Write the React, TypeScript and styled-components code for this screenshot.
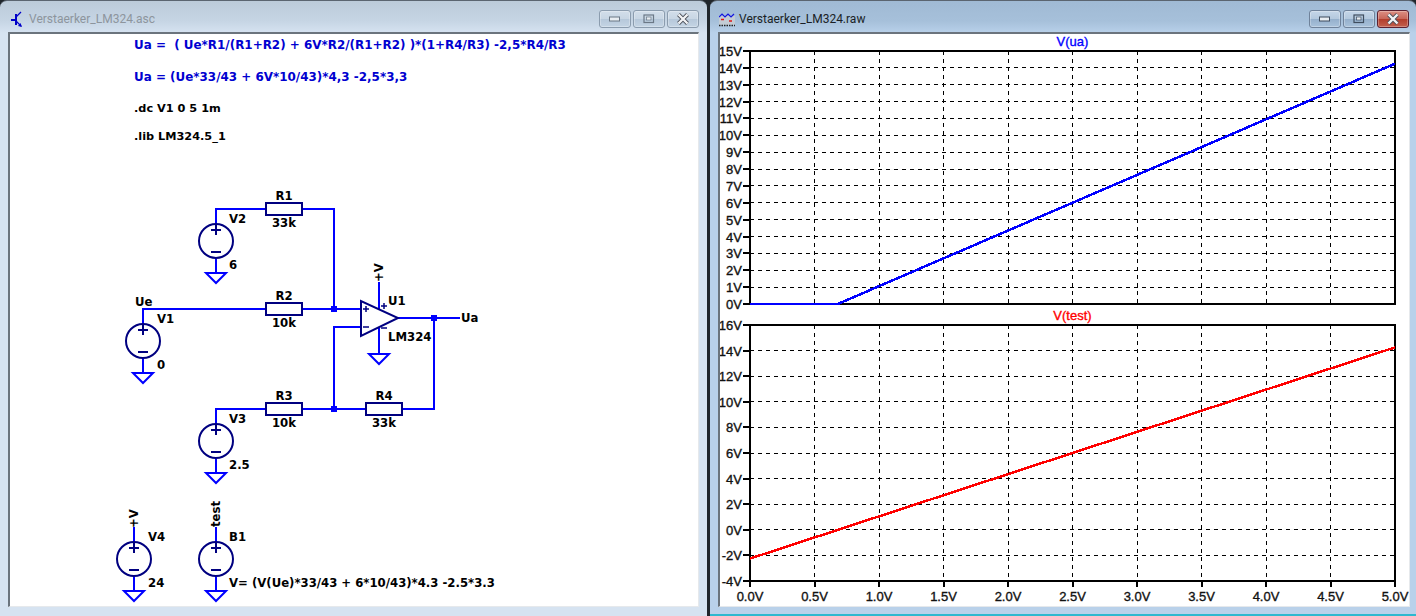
import React from 'react';
import styled, { createGlobalStyle } from 'styled-components';

const GlobalStyle = createGlobalStyle`
  html, body {
    margin: 0;
    padding: 0;
    background: #20262b;
  }
`;

const Desktop = styled.div`
  display: flex;
  gap: 3px;
  width: 1416px;
  height: 616px;
  overflow: hidden;
  background: #20262b;
`;

const Window = styled.section<{ $active?: boolean }>`
  display: flex;
  flex-direction: column;
  box-sizing: border-box;
  width: ${(p) => (p.$active ? '706px' : '707px')};
  height: 616px;
  border-radius: 7px 7px 0 0;
  border-top: 1px solid #5b6570;
  background: ${(p) =>
    p.$active
      ? 'linear-gradient(#a0bad4 0, #a6c0da 20px, #b9d1ea 32px)'
      : 'linear-gradient(#bccbd9 0, #c6d5e4 20px, #d6e3f1 32px)'};
  ${(p) => p.$active && 'border-bottom: 2px solid #2db8cf;'}
`;

const TitleBar = styled.header<{ $active?: boolean }>`
  display: flex;
  align-items: center;
  flex: none;
  box-sizing: border-box;
  height: 31px;
  padding: 5px ${(p) => (p.$active ? '7px' : '8px')} 0 9px;
  gap: 4px;
`;

const TitleText = styled.span<{ $active?: boolean }>`
  font: 12px Roboto, 'Liberation Sans', sans-serif;
  color: ${(p) => (p.$active ? '#1a1f26' : '#8d959d')};
`;

const WindowButtons = styled.div`
  display: flex;
  gap: 2px;
  margin-left: auto;
`;

const WindowButton = styled.div<{ $tone: 'idle' | 'active' | 'close' }>`
  display: flex;
  align-items: center;
  justify-content: center;
  box-sizing: border-box;
  width: 32px;
  height: 18px;
  border-radius: 3px;
  border: 1px solid ${(p) => (p.$tone === 'close' ? '#5d2030' : p.$tone === 'active' ? '#6f829a' : '#8b9cae')};
  box-shadow: inset 0 0 0 1px rgba(255, 255, 255, 0.28);
  background: ${(p) =>
    p.$tone === 'close'
      ? 'linear-gradient(#dc8f83 0, #c9675a 48%, #b33d2c 52%, #c2604e 100%)'
      : p.$tone === 'active'
        ? 'linear-gradient(#c5d6e8 0, #b4c9de 48%, #95b0cc 52%, #a9c2db 100%)'
        : 'linear-gradient(#d2deea 0, #c8d6e4 48%, #b6c8da 52%, #c4d4e4 100%)'};
`;

const Client = styled.div<{ $active?: boolean }>`
  flex: 1;
  min-height: 0;
  display: flex;
  flex-direction: column;
  box-sizing: border-box;
  margin: 0 ${(p) => (p.$active ? '6px' : '8px')} ${(p) => (p.$active ? '7px' : '9px')} 8px;
  background: #fff;
  border-style: solid;
  border-color: #6b747d #e6e9ec #e6e9ec #6b747d;
  border-width: 2px 1px 1px 2px;
  overflow: hidden;
`;

const Notes = styled.div`
  flex: none;
  display: flex;
  flex-direction: column;
  padding: 3px 0 0 124px;
`;

const Formula = styled.div`
  font: bold 11.94px/16px 'DejaVu Sans', sans-serif;
  color: #0000d0;
  white-space: pre;
  margin-bottom: 16px;
`;

const Directive = styled.div`
  font: bold 11.3px/16px 'DejaVu Sans', sans-serif;
  color: #000;
  white-space: pre;
  &:not(:last-child) {
    margin-bottom: 12px;
  }
`;

const Drawing = styled.svg`
  display: block;
  flex: 1;
  min-height: 0;
`;

const Label = styled.text`
  font: bold 11.7px 'DejaVu Sans', sans-serif;
  fill: #000;
`;

const AxisLabel = styled.text`
  font: 13px 'Liberation Sans', Arial, sans-serif;
  fill: #111;
  stroke: #111;
  stroke-width: 0.35px;
`;

const PlotTitle = styled.text<{ $color: string }>`
  font: 13px 'Liberation Sans', Arial, sans-serif;
  fill: ${(p) => p.$color};
  stroke: ${(p) => p.$color};
  stroke-width: 0.35px;
`;

const WIRE = '#0000ff';
const PART = '#000080';

function TransistorIcon() {
  return (
    <svg width="16" height="20" viewBox="9 8 16 20">
      <path d="M11 19h4M16 13v11" stroke="#0000c8" strokeWidth="2" fill="none" />
      <path d="M16 16l5-5M16 20l5 5" stroke="#0000c8" strokeWidth="1.3" fill="none" />
      <path d="M22 26l-4-1 2.500-3z" fill="#0000c8" />
    </svg>
  );
}

function WaveIcon() {
  return (
    <svg width="16" height="20" viewBox="719 8 16 20">
      <rect x="719" y="15" width="16" height="9" fill="#c3ccd5" />
      <path d="M719 16l3-3 3 3 3-3 3 3 3-3" stroke="#1414e0" strokeWidth="1.200" fill="none" />
      <path d="M721 18.500h3M729 20h3" stroke="#e01818" strokeWidth="1.400" fill="none" />
      <path d="M719 24.500h16" stroke="#222" strokeWidth="1.500" strokeDasharray="1.500 1" fill="none" />
    </svg>
  );
}

function ButtonGlyph({ kind, active }: { kind: 'min' | 'max' | 'close'; active?: boolean }) {
  const edge = kind === 'close' ? '#4a4f58' : active ? '#3f4d5e' : '#6b7886';
  if (kind === 'min') {
    return (
      <svg width="12" height="6" viewBox="0 0 12 6">
        <rect x="0.500" y="1" width="10" height="4" fill="#e8edf2" stroke={edge} />
      </svg>
    );
  }
  if (kind === 'max') {
    return (
      <svg width="12" height="10" viewBox="0 0 12 10">
        <rect x="1" y="1" width="9.500" height="7.500" fill="none" stroke={edge} strokeWidth="1.200" />
        <rect x="3.500" y="3" width="4.500" height="3" fill="#e8edf2" stroke={edge} strokeWidth="0.700" />
      </svg>
    );
  }
  return (
    <svg width="14" height="12" viewBox="0 0 14 12">
      <path d="M2.500 1.500L11.500 10.500M11.500 1.500L2.500 10.500" stroke={edge} strokeWidth="4" />
      <path d="M2.500 1.500L11.500 10.500M11.500 1.500L2.500 10.500" stroke="#f2f3f5" strokeWidth="2.400" />
    </svg>
  );
}

function WindowFrame({
  title,
  active,
  icon,
  children,
}: {
  title: string;
  active?: boolean;
  icon: React.ReactNode;
  children: React.ReactNode;
}) {
  const tone = active ? 'active' : 'idle';
  return (
    <Window $active={active}>
      <TitleBar $active={active}>
        {icon}
        <TitleText $active={active}>{title}</TitleText>
        <WindowButtons>
          <WindowButton $tone={tone}>
            <ButtonGlyph kind="min" active={active} />
          </WindowButton>
          <WindowButton $tone={tone}>
            <ButtonGlyph kind="max" active={active} />
          </WindowButton>
          <WindowButton $tone={active ? 'close' : 'idle'}>
            <ButtonGlyph kind="close" active={active} />
          </WindowButton>
        </WindowButtons>
      </TitleBar>
      <Client $active={active}>{children}</Client>
    </Window>
  );
}

function Source({ x, y, tail = 15 }: { x: number; y: number; tail?: number }) {
  return (
    <g>
      <circle cx={x} cy={y} r="17" fill="none" stroke={PART} strokeWidth="2" />
      <path d={`M${x - 5} ${y - 11}h10M${x} ${y - 16}v10M${x - 5} ${y + 11}h10`} stroke={PART} strokeWidth="2" fill="none" />
      <path d={`M${x} ${y + 18}v${tail}`} stroke={WIRE} strokeWidth="2" fill="none" />
    </g>
  );
}

function Ground({ x, y }: { x: number; y: number }) {
  return <path d={`M${x - 10} ${y}h20l-10 10z`} fill="none" stroke={WIRE} strokeWidth="2" />;
}

function Resistor({ x, y }: { x: number; y: number }) {
  return <rect x={x} y={y - 6} width="36" height="12" fill="#fff" stroke={PART} strokeWidth="2" />;
}

function Junction({ x, y }: { x: number; y: number }) {
  return <rect x={x - 3} y={y - 3} width="6" height="6" fill={WIRE} />;
}

const wires = [
  'M216 223V209H266M302 209H334V309',
  'M143 323V309H266M302 309H361',
  'M361 327H334V409',
  'M398 318H460',
  'M434 318V409H402',
  'M366 409H302M266 409H216V423',
  'M379 282V309M379 328V354',
  'M134 541V527M216 541V527',
];

const resistors = [
  { x: 266, y: 209 },
  { x: 266, y: 309 },
  { x: 266, y: 409 },
  { x: 366, y: 409 },
];

const labels = [
  { x: 284, y: 200, t: 'R1', mid: true },
  { x: 284, y: 227, t: '33k', mid: true },
  { x: 284, y: 300, t: 'R2', mid: true },
  { x: 284, y: 327, t: '10k', mid: true },
  { x: 284, y: 400, t: 'R3', mid: true },
  { x: 284, y: 427, t: '10k', mid: true },
  { x: 384, y: 400, t: 'R4', mid: true },
  { x: 384, y: 427, t: '33k', mid: true },
  { x: 229, y: 223, t: 'V2' },
  { x: 229, y: 269, t: '6' },
  { x: 135, y: 306, t: 'Ue' },
  { x: 157, y: 323, t: 'V1' },
  { x: 157, y: 369, t: '0' },
  { x: 388, y: 305, t: 'U1' },
  { x: 388, y: 341, t: 'LM324' },
  { x: 461, y: 322, t: 'Ua' },
  { x: 229, y: 423, t: 'V3' },
  { x: 229, y: 469, t: '2.5' },
  { x: 148, y: 541, t: 'V4' },
  { x: 148, y: 587, t: '24' },
  { x: 229, y: 541, t: 'B1' },
  { x: 229, y: 587, t: 'V= (V(Ue)*33/43 + 6*10/43)*4.3 -2.5*3.3' },
];

function Schematic() {
  return (
    <Drawing viewBox="10 145 688 461">
      <path d={wires.join('')} fill="none" stroke={WIRE} strokeWidth="2" shapeRendering="crispEdges" />
      {resistors.map((r) => (
        <Resistor key={`${r.x}-${r.y}`} x={r.x} y={r.y} />
      ))}
      <Source x={216} y={241} />
      <Source x={143} y={341} />
      <Source x={216} y={441} />
      <Source x={134} y={559} />
      <Source x={216} y={559} />
      <Ground x={216} y={273} />
      <Ground x={143} y={373} />
      <Ground x={216} y={473} />
      <Ground x={379} y={354} />
      <Ground x={134} y={591} />
      <Ground x={216} y={591} />
      <path d="M361 301V336L398 318Z" fill="#fff" stroke={PART} strokeWidth="2" />
      <path d="M363 309h6M366 306v6M363 327h6M381 306h6M384 303v6M381 328h6" stroke={PART} strokeWidth="1.500" fill="none" />
      <Junction x={334} y={309} />
      <Junction x={334} y={409} />
      <Junction x={434} y={318} />
      {labels.map((l) => (
        <Label key={`${l.x}-${l.y}`} x={l.x} y={l.y} textAnchor={l.mid ? 'middle' : undefined}>
          {l.t}
        </Label>
      ))}
      <Label transform="translate(383 282) rotate(-90)">+V</Label>
      <Label transform="translate(138 528) rotate(-90)">+V</Label>
      <Label transform="translate(220 527) rotate(-90)">test</Label>
    </Drawing>
  );
}

const PLOT_LEFT = 750;
const PLOT_RIGHT = 1395;
const xStep = (PLOT_RIGHT - PLOT_LEFT) / 10;
const xTicks = Array.from({ length: 11 }, (_, i) => ({
  x: PLOT_LEFT + i * xStep,
  text: `${(i * 0.5).toFixed(1)}V`,
}));

function Plot({
  top,
  bottom,
  min,
  max,
  step,
  title,
  color,
  points,
  showX,
}: {
  top: number;
  bottom: number;
  min: number;
  max: number;
  step: number;
  title: string;
  color: string;
  points: [number, number][];
  showX?: boolean;
}) {
  const yOf = (v: number) => bottom - ((v - min) / (max - min)) * (bottom - top);
  const xOf = (v: number) => PLOT_LEFT + (v / 5) * (PLOT_RIGHT - PLOT_LEFT);
  const yTicks: number[] = [];
  for (let v = min; v <= max; v += step) yTicks.push(v);
  const line = points.map(([x, y]) => `${xOf(x).toFixed(1)},${yOf(y).toFixed(1)}`).join(' ');

  return (
    <g>
      <PlotTitle $color={color} x={(PLOT_LEFT + PLOT_RIGHT) / 2} y={top - 5} textAnchor="middle">
        {title}
      </PlotTitle>
      <g stroke="#000" strokeWidth="1" strokeDasharray="4 4" shapeRendering="crispEdges">
        {xTicks.slice(1, -1).map((t) => (
          <line key={t.x} x1={t.x} x2={t.x} y1={top} y2={bottom} />
        ))}
        {yTicks.slice(1, -1).map((v) => (
          <line key={v} x1={PLOT_LEFT} x2={PLOT_RIGHT} y1={yOf(v)} y2={yOf(v)} />
        ))}
      </g>
      <g stroke="#000" strokeWidth="2" shapeRendering="crispEdges">
        {yTicks.map((v) => (
          <line key={v} x1={PLOT_LEFT - 7} x2={PLOT_LEFT} y1={yOf(v)} y2={yOf(v)} />
        ))}
        {showX &&
          xTicks.map((t) => <line key={t.x} x1={t.x} x2={t.x} y1={bottom} y2={bottom + 6} />)}
      </g>
      <rect
        x={PLOT_LEFT}
        y={top}
        width={PLOT_RIGHT - PLOT_LEFT}
        height={bottom - top}
        fill="none"
        stroke="#000"
        strokeWidth="2"
        shapeRendering="crispEdges"
      />
      <polyline points={line} fill="none" stroke={color} strokeWidth="2.500" shapeRendering="crispEdges" />
      {yTicks.map((v) => (
        <AxisLabel key={v} x={PLOT_LEFT - 8} y={yOf(v) + 5} textAnchor="end">
          {v}V
        </AxisLabel>
      ))}
      {showX &&
        xTicks.map((t) => (
          <AxisLabel key={t.x} x={t.x} y={601} textAnchor="middle">
            {t.text}
          </AxisLabel>
        ))}
    </g>
  );
}

function Waveforms() {
  return (
    <Drawing viewBox="720 34 689 572">
      <Plot
        top={51}
        bottom={304}
        min={0}
        max={15}
        step={1}
        title="V(ua)"
        color="#0000ff"
        points={[
          [0, 0],
          [0.68, 0],
          [5, 14.25],
        ]}
      />
      <Plot
        top={325}
        bottom={581}
        min={-4}
        max={16}
        step={2}
        title="V(test)"
        color="#ff0000"
        showX
        points={[
          [0, -2.25],
          [5, 14.25],
        ]}
      />
    </Drawing>
  );
}

export default function App() {
  return (
    <Desktop>
      <GlobalStyle />
      <WindowFrame title="Verstaerker_LM324.asc" icon={<TransistorIcon />}>
        <Notes>
          <Formula>{'Ua =  ( Ue*R1/(R1+R2) + 6V*R2/(R1+R2) )*(1+R4/R3) -2,5*R4/R3'}</Formula>
          <Formula>{'Ua = (Ue*33/43 + 6V*10/43)*4,3 -2,5*3,3'}</Formula>
          <Directive>.dc V1 0 5 1m</Directive>
          <Directive>.lib LM324.5_1</Directive>
        </Notes>
        <Schematic />
      </WindowFrame>
      <WindowFrame title="Verstaerker_LM324.raw" active icon={<WaveIcon />}>
        <Waveforms />
      </WindowFrame>
    </Desktop>
  );
}
